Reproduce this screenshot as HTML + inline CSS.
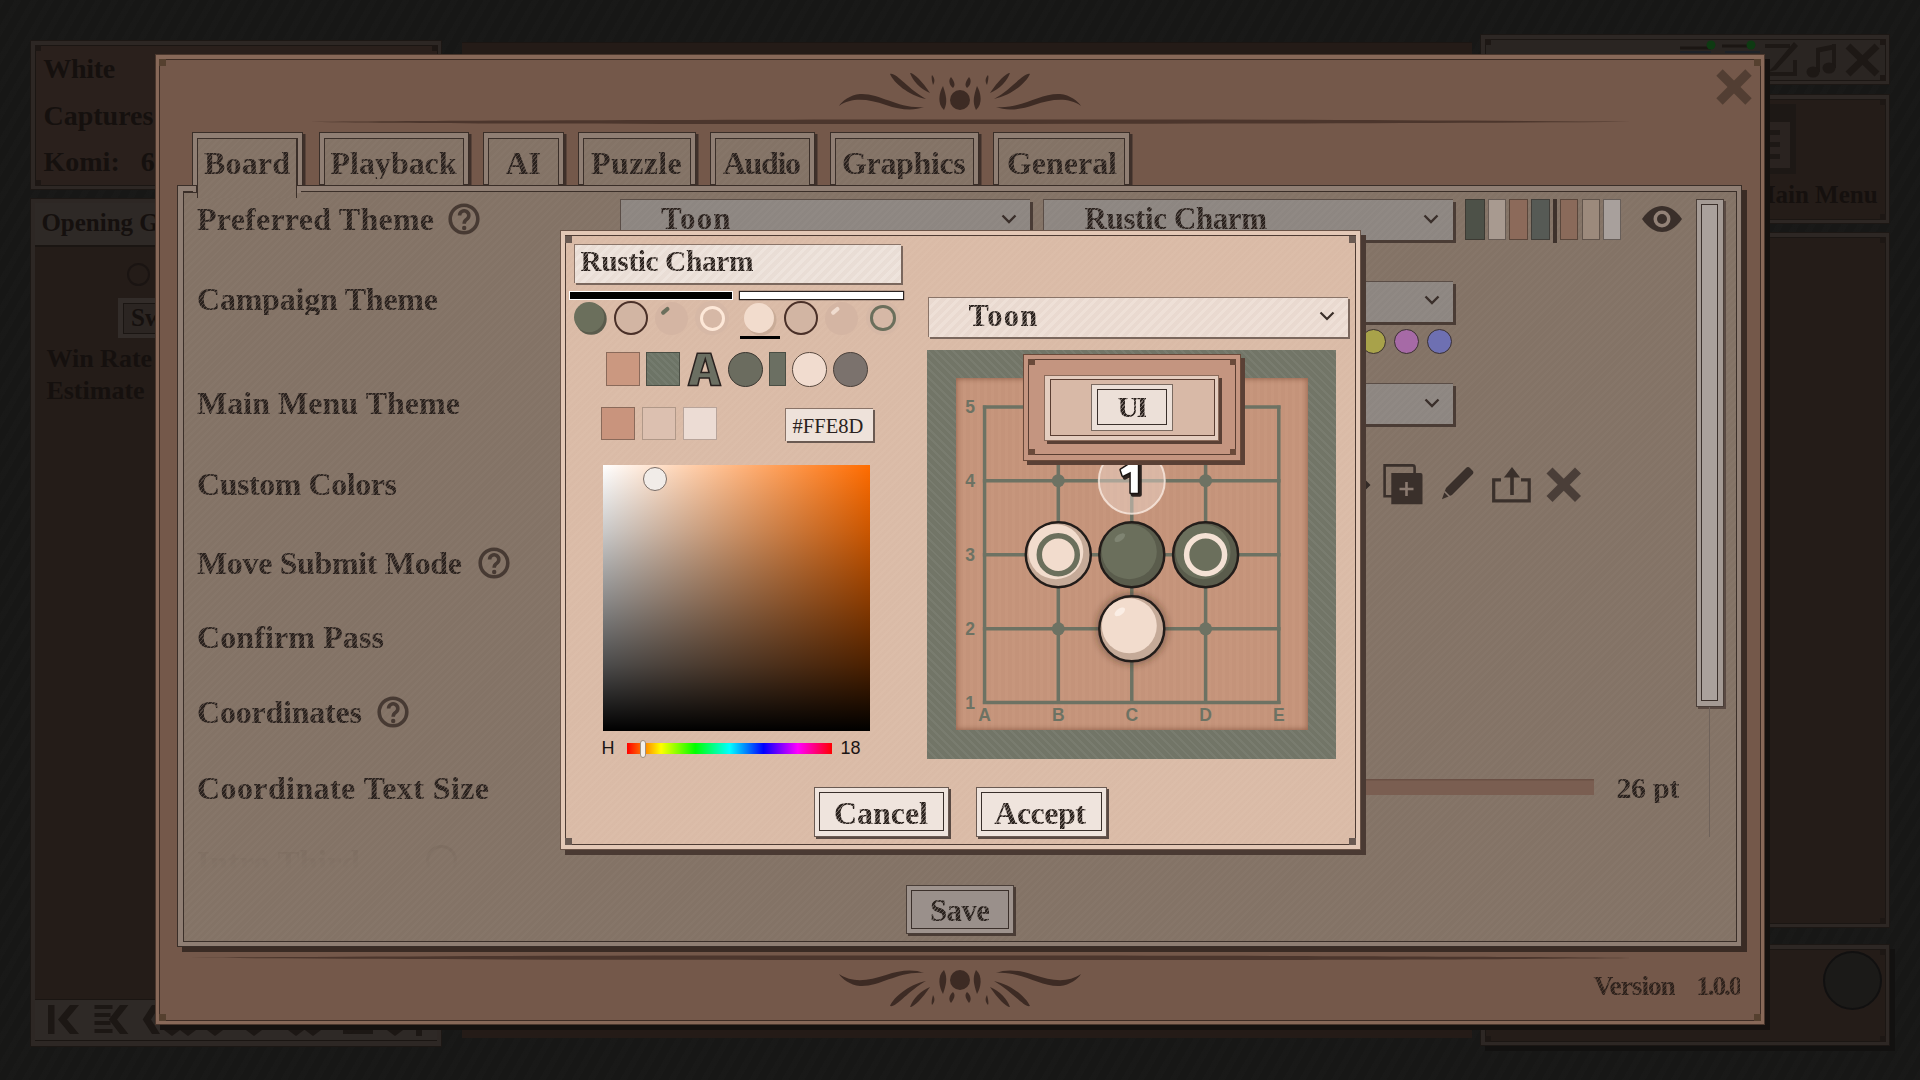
<!DOCTYPE html>
<html><head><meta charset="utf-8">
<style>
*{margin:0;padding:0;box-sizing:border-box}
html,body{width:1920px;height:1080px;overflow:hidden}
body{background:#171716;position:relative;font-family:"Liberation Serif",serif;font-weight:bold;color:#2e2521}
.a{position:absolute}
.t{position:absolute;white-space:nowrap;line-height:1}
svg{position:absolute;overflow:visible}
</style></head><body>

<div class="a" style="left:0px;top:0px;width:1920px;height:1080px;background-image:repeating-linear-gradient(-60deg,rgba(255,255,255,0.006) 0px,rgba(255,255,255,0.006) 6px,rgba(0,0,0,0.0) 6px,rgba(0,0,0,0) 14px)"></div>
<div class="a" style="left:30px;top:40px;width:412px;height:150px;background:#2d2724;box-shadow:inset 0 0 0 1px #1c1714;"></div>
<div class="a" style="left:34.5px;top:44.5px;width:403.0px;height:141.0px;background:#2a201c;border:1.5px solid #1b1613;"></div>
<div class="a" style="left:34.5px;top:44.5px;width:6px;height:6px;background:#1d1714"></div>
<div class="a" style="left:431.5px;top:44.5px;width:6px;height:6px;background:#1d1714"></div>
<div class="a" style="left:34.5px;top:179.5px;width:6px;height:6px;background:#1d1714"></div>
<div class="a" style="left:431.5px;top:179.5px;width:6px;height:6px;background:#1d1714"></div>
<div class="t" style="left:43.3px;top:54.5px;font-size:28px;font-family:'Liberation Serif',serif;font-weight:bold;color:#15100e;letter-spacing:-0.277px;">White</div>
<div class="t" style="left:43.5px;top:102.1px;font-size:28px;font-family:'Liberation Serif',serif;font-weight:bold;color:#15100e;">Captures</div>
<div class="t" style="left:43.5px;top:147.8px;font-size:28px;font-family:'Liberation Serif',serif;font-weight:bold;color:#15100e;">Komi:&nbsp;&nbsp; 6</div>
<div class="a" style="left:30px;top:198px;width:412px;height:849px;background:#2d2724;box-shadow:inset 0 0 0 1px #1c1714"></div>
<div class="a" style="left:35px;top:203px;width:402px;height:43px;background:#2e2926"></div>
<div class="t" style="left:41.4px;top:209.7px;font-size:25px;font-family:'Liberation Serif',serif;font-weight:bold;color:#15100e;">Opening G</div>
<div class="a" style="left:35px;top:245px;width:402px;height:2px;background:#1a1512"></div>
<div class="a" style="left:35px;top:247px;width:402px;height:752px;background:#241c18"></div>
<div class="a" style="left:127px;top:263px;width:23px;height:23px;border-radius:50%;border:2px solid #1a1412"></div>
<div class="a" style="left:118px;top:298px;width:120px;height:40px;background:#322c29;"></div>
<div class="a" style="left:122.5px;top:302.5px;width:111.0px;height:31.0px;background:#2b2522;border:1.5px solid #1a1512;"></div>
<div class="t" style="left:131px;top:305.2px;font-size:25px;font-family:'Liberation Serif',serif;font-weight:bold;color:#15100e;">Sw</div>
<div class="t" style="left:46.4px;top:346.4px;font-size:26px;font-family:'Liberation Serif',serif;font-weight:bold;color:#15100e;">Win Rate</div>
<div class="t" style="left:46.4px;top:378.1px;font-size:26px;font-family:'Liberation Serif',serif;font-weight:bold;color:#15100e;">Estimate</div>
<div class="a" style="left:35px;top:999px;width:402px;height:42px;background:#2e2926;border-top:1.5px solid #1a1512;border-bottom:1.5px solid #1a1512"></div>
<svg style="left:30px;top:990px" width="420" height="60"><g fill="#1c1714"><rect x="18" y="15" width="6.5" height="29"/><path d="M40 15 L28 29.5 L40 44 L49 44 L37 29.5 L49 15Z"/><rect x="64.5" y="15" width="18" height="4"/><rect x="64.5" y="23" width="16" height="4"/><rect x="64.5" y="31" width="16" height="4"/><rect x="64.5" y="39" width="18" height="4"/><path d="M90 15 L78.8 29.5 L90 44 L98.4 44 L87 29.5 L98.4 15Z"/><path d="M122 15 L112.7 29.5 L122 44 L130 44 L121 29.5 L130 15Z"/><path d="M134 40 L142 46 L150 40 L150 38 L134 38Z"/><path d="M150 40 L158 46 L166 40 L166 38 L150 38Z"/><path d="M177 40 L185 46 L193 40 L193 38 L177 38Z"/><path d="M216 40 L224 46 L232 40 L232 38 L216 38Z"/><path d="M258 40 L266 46 L274 40 L274 38 L258 38Z"/><path d="M275 40 L283 46 L291 40 L291 38 L275 38Z"/><rect x="313" y="40" width="30" height="4"/><path d="M313 38 L320 44 L327 38Z"/><path d="M357 40 L365 46 L373 40 L373 38 L357 38Z"/><rect x="386" y="38" width="6" height="8"/></g></svg>
<div class="a" style="left:462px;top:42px;width:1010px;height:996px;background:#241b17;box-shadow:inset 0 1px 0 #1b1512"></div>
<div class="a" style="left:1480px;top:34px;width:410px;height:51px;background:#2d2724;box-shadow:inset 0 0 0 1px #1c1714;"></div>
<div class="a" style="left:1484.5px;top:38.5px;width:401.0px;height:42.0px;background:#2a2522;border:1.5px solid #1b1613;"></div>
<div class="a" style="left:1484.5px;top:38.5px;width:6px;height:6px;background:#1d1714"></div>
<div class="a" style="left:1879.5px;top:38.5px;width:6px;height:6px;background:#1d1714"></div>
<div class="a" style="left:1484.5px;top:74.5px;width:6px;height:6px;background:#1d1714"></div>
<div class="a" style="left:1879.5px;top:74.5px;width:6px;height:6px;background:#1d1714"></div>
<svg style="left:1670px;top:34px" width="220" height="50">
<g stroke="#1b1613" stroke-width="3"><line x1="10" y1="14" x2="41" y2="14"/><line x1="52" y1="12" x2="81" y2="12"/></g>
<g stroke="#1e2228" stroke-width="2"><line x1="10" y1="18" x2="41" y2="18"/><line x1="55" y1="18" x2="90" y2="18"/></g>
<circle cx="41" cy="11" r="4.5" fill="#0e3a12"/><circle cx="81" cy="11" r="4.5" fill="#0e3a12"/>
<path d="M95 12 L120 12 M125 26 L125 40 L98 40" fill="none" stroke="#1d1815" stroke-width="4"/>
<path d="M124 8 L104 32 L98 38 L106 36 L128 12Z" fill="#1d1815"/>
<g fill="#1d1815"><path d="M146 14 L166 10 L166 15 L146 19Z"/><rect x="146" y="14" width="4" height="24"/><rect x="162" y="10" width="4" height="24"/><ellipse cx="143" cy="38" rx="6.5" ry="5.5"/><ellipse cx="159" cy="34" rx="6.5" ry="5.5"/></g>
<g stroke="#1d1815" stroke-width="7"><line x1="178" y1="12" x2="207" y2="40"/><line x1="207" y1="12" x2="178" y2="40"/></g>
</svg>
<div class="a" style="left:1480px;top:94px;width:410px;height:130px;background:#2d2724;box-shadow:inset 0 0 0 1px #1c1714;"></div>
<div class="a" style="left:1484.5px;top:98.5px;width:401.0px;height:121.0px;background:#241c18;border:1.5px solid #1b1613;"></div>
<div class="a" style="left:1484.5px;top:98.5px;width:6px;height:6px;background:#1d1714"></div>
<div class="a" style="left:1879.5px;top:98.5px;width:6px;height:6px;background:#1d1714"></div>
<div class="a" style="left:1484.5px;top:213.5px;width:6px;height:6px;background:#1d1714"></div>
<div class="a" style="left:1879.5px;top:213.5px;width:6px;height:6px;background:#1d1714"></div>
<div class="a" style="left:1740px;top:104px;width:56px;height:70px;background:#1d1815"></div>
<div class="a" style="left:1740px;top:121.7px;width:50px;height:46.3px;background:#2a2320"></div>
<svg style="left:1740px;top:104px" width="56" height="70"><g fill="#1d1815"><rect x="0" y="26" width="40" height="5"/><rect x="0" y="38" width="40" height="5"/><rect x="0" y="50" width="40" height="5"/></g></svg>
<div class="t" style="left:1751.8999999999999px;top:182.2px;font-size:25px;font-family:'Liberation Serif',serif;font-weight:bold;color:#15100e;">Main Menu</div>
<div class="a" style="left:1480px;top:232px;width:410px;height:696px;background:#2d2724;box-shadow:inset 0 0 0 1px #1c1714;"></div>
<div class="a" style="left:1484.5px;top:236.5px;width:401.0px;height:687.0px;background:#241c18;border:1.5px solid #1b1613;"></div>
<div class="a" style="left:1484.5px;top:236.5px;width:6px;height:6px;background:#1d1714"></div>
<div class="a" style="left:1879.5px;top:236.5px;width:6px;height:6px;background:#1d1714"></div>
<div class="a" style="left:1484.5px;top:917.5px;width:6px;height:6px;background:#1d1714"></div>
<div class="a" style="left:1879.5px;top:917.5px;width:6px;height:6px;background:#1d1714"></div>
<div class="a" style="left:1480px;top:944px;width:410px;height:102px;background:#2d2724;box-shadow:inset 0 0 0 1px #1c1714,5px 5px 0 #121110;"></div>
<div class="a" style="left:1484.5px;top:948.5px;width:401.0px;height:93.0px;background:#241c18;border:1.5px solid #1b1613;"></div>
<div class="a" style="left:1484.5px;top:948.5px;width:6px;height:6px;background:#1d1714"></div>
<div class="a" style="left:1879.5px;top:948.5px;width:6px;height:6px;background:#1d1714"></div>
<div class="a" style="left:1484.5px;top:1035.5px;width:6px;height:6px;background:#1d1714"></div>
<div class="a" style="left:1879.5px;top:1035.5px;width:6px;height:6px;background:#1d1714"></div>
<div class="a" style="left:1823px;top:951px;width:59px;height:59px;border-radius:50%;background:#1b1a18;border:2px solid #111010"></div>
<div class="a" style="left:155px;top:54px;width:1610px;height:971px;background:#876858;box-shadow:inset 0 0 0 1px #4a372d,5px 5px 0 #15110f"></div>
<div class="a" style="left:159px;top:59px;width:1602px;height:962px;background:#74584a;border:1.5px solid #3e2c24"></div>
<div class="a" style="left:159px;top:59px;width:7px;height:7px;background:#55402f"></div>
<div class="a" style="left:1754px;top:59px;width:7px;height:7px;background:#55402f"></div>
<div class="a" style="left:159px;top:1014px;width:7px;height:7px;background:#55402f"></div>
<div class="a" style="left:1754px;top:1014px;width:7px;height:7px;background:#55402f"></div>
<svg style="left:838px;top:71px" width="244" height="42" viewBox="0 0 244 42"><g fill="#3d2b24">
<circle cx="122" cy="29" r="10"/>
<path d="M106 39 C99 33 101 22 105 15 C108 24 110 31 106 39Z"/>
<path d="M138 39 C145 33 143 22 139 15 C136 24 134 31 138 39Z"/>
<path d="M115 17 C110 13 111 8 113 6 C116 10 118 14 115 17Z"/>
<path d="M129 17 C134 13 133 8 131 6 C128 10 126 14 129 17Z"/>
<path d="M95 14 C94 10 93 6 94 4 C97 7 97 11 95 14Z"/>
<path d="M149 14 C150 10 151 6 150 4 C147 7 147 11 149 14Z"/>
<path d="M92 22 C82 18 75 10 72 2 C76 2 84 10 92 22Z"/>
<path d="M152 22 C162 18 169 10 172 2 C168 2 160 10 152 22Z"/>
<path d="M88 28 C70 24 56 12 52 3 C58 1 70 18 88 28Z"/>
<path d="M156 28 C174 24 188 12 192 3 C186 1 174 18 156 28Z"/>
<path d="M86 36 C60 38 42 22 22 23 C12 24 4 30 1 35 C14 26 30 28 48 34 C62 39 76 40 86 36Z"/>
<path d="M158 36 C184 38 202 22 222 23 C232 24 240 30 243 35 C230 26 214 28 196 34 C182 39 168 40 158 36Z"/>
</g></svg>
<svg style="left:838px;top:967px" width="244" height="42" viewBox="0 0 244 42"><g transform="translate(0,42) scale(1,-1)"><g fill="#3d2b24">
<circle cx="122" cy="29" r="10"/>
<path d="M106 39 C99 33 101 22 105 15 C108 24 110 31 106 39Z"/>
<path d="M138 39 C145 33 143 22 139 15 C136 24 134 31 138 39Z"/>
<path d="M115 17 C110 13 111 8 113 6 C116 10 118 14 115 17Z"/>
<path d="M129 17 C134 13 133 8 131 6 C128 10 126 14 129 17Z"/>
<path d="M95 14 C94 10 93 6 94 4 C97 7 97 11 95 14Z"/>
<path d="M149 14 C150 10 151 6 150 4 C147 7 147 11 149 14Z"/>
<path d="M92 22 C82 18 75 10 72 2 C76 2 84 10 92 22Z"/>
<path d="M152 22 C162 18 169 10 172 2 C168 2 160 10 152 22Z"/>
<path d="M88 28 C70 24 56 12 52 3 C58 1 70 18 88 28Z"/>
<path d="M156 28 C174 24 188 12 192 3 C186 1 174 18 156 28Z"/>
<path d="M86 36 C60 38 42 22 22 23 C12 24 4 30 1 35 C14 26 30 28 48 34 C62 39 76 40 86 36Z"/>
<path d="M158 36 C184 38 202 22 222 23 C232 24 240 30 243 35 C230 26 214 28 196 34 C182 39 168 40 158 36Z"/>
</g></g></svg>
<svg style="left:300px;top:114.5px" width="1330" height="14" viewBox="0 0 1560 14" preserveAspectRatio="none"><path d="M0 7 C200 5 600 4.2 1000 4.6 C1200 4.8 1400 5.6 1560 6.8 C1400 8 1200 8.6 1000 8.8 C600 9.4 200 9.2 0 7Z" fill="#4a352b" opacity="0.95"/></svg>
<svg style="left:190px;top:950.5px" width="1440" height="14" viewBox="0 0 1560 14" preserveAspectRatio="none"><g transform="translate(1560,0) scale(-1,1)"><path d="M0 7 C200 5 600 4.2 1000 4.6 C1200 4.8 1400 5.6 1560 6.8 C1400 8 1200 8.6 1000 8.8 C600 9.4 200 9.2 0 7Z" fill="#4a352b" opacity="0.95"/></g></svg>
<svg style="left:1716px;top:69px" width="36" height="36"><g stroke="#523e33" stroke-width="9" stroke-linecap="butt"><line x1="3.5" y1="3.5" x2="32.5" y2="32.5"/><line x1="32.5" y1="3.5" x2="3.5" y2="32.5"/></g></svg>
<div class="a" style="left:192px;top:132px;width:111px;height:61px;background:#8f7e73;box-shadow:inset 0 0 0 1px #3a2e28,2.5px 2px 0 #3f302a"></div>
<div class="a" style="left:197px;top:137.5px;width:101px;height:61px;background:#857467;border:1.5px solid #3b2f29;border-bottom:none;background-image:repeating-linear-gradient(-45deg,rgba(255,255,255,0.012) 0px,rgba(255,255,255,0.012) 2px,rgba(0,0,0,0.01) 2px,rgba(0,0,0,0.01) 5px)"></div>
<div class="a" style="left:319px;top:132px;width:150px;height:53px;background:#8f7e73;box-shadow:inset 0 0 0 1px #3a2e28,2.5px 2px 0 #3f302a"></div>
<div class="a" style="left:324px;top:137.5px;width:140px;height:53px;background:#857467;border:1.5px solid #3b2f29;border-bottom:none;background-image:repeating-linear-gradient(-45deg,rgba(255,255,255,0.012) 0px,rgba(255,255,255,0.012) 2px,rgba(0,0,0,0.01) 2px,rgba(0,0,0,0.01) 5px)"></div>
<div class="a" style="left:483px;top:132px;width:81px;height:53px;background:#8f7e73;box-shadow:inset 0 0 0 1px #3a2e28,2.5px 2px 0 #3f302a"></div>
<div class="a" style="left:488px;top:137.5px;width:71px;height:53px;background:#857467;border:1.5px solid #3b2f29;border-bottom:none;background-image:repeating-linear-gradient(-45deg,rgba(255,255,255,0.012) 0px,rgba(255,255,255,0.012) 2px,rgba(0,0,0,0.01) 2px,rgba(0,0,0,0.01) 5px)"></div>
<div class="a" style="left:578px;top:132px;width:118px;height:53px;background:#8f7e73;box-shadow:inset 0 0 0 1px #3a2e28,2.5px 2px 0 #3f302a"></div>
<div class="a" style="left:583px;top:137.5px;width:108px;height:53px;background:#857467;border:1.5px solid #3b2f29;border-bottom:none;background-image:repeating-linear-gradient(-45deg,rgba(255,255,255,0.012) 0px,rgba(255,255,255,0.012) 2px,rgba(0,0,0,0.01) 2px,rgba(0,0,0,0.01) 5px)"></div>
<div class="a" style="left:710px;top:132px;width:105px;height:53px;background:#8f7e73;box-shadow:inset 0 0 0 1px #3a2e28,2.5px 2px 0 #3f302a"></div>
<div class="a" style="left:715px;top:137.5px;width:95px;height:53px;background:#857467;border:1.5px solid #3b2f29;border-bottom:none;background-image:repeating-linear-gradient(-45deg,rgba(255,255,255,0.012) 0px,rgba(255,255,255,0.012) 2px,rgba(0,0,0,0.01) 2px,rgba(0,0,0,0.01) 5px)"></div>
<div class="a" style="left:830px;top:132px;width:149px;height:53px;background:#8f7e73;box-shadow:inset 0 0 0 1px #3a2e28,2.5px 2px 0 #3f302a"></div>
<div class="a" style="left:835px;top:137.5px;width:139px;height:53px;background:#857467;border:1.5px solid #3b2f29;border-bottom:none;background-image:repeating-linear-gradient(-45deg,rgba(255,255,255,0.012) 0px,rgba(255,255,255,0.012) 2px,rgba(0,0,0,0.01) 2px,rgba(0,0,0,0.01) 5px)"></div>
<div class="a" style="left:993px;top:132px;width:137px;height:53px;background:#8f7e73;box-shadow:inset 0 0 0 1px #3a2e28,2.5px 2px 0 #3f302a"></div>
<div class="a" style="left:998px;top:137.5px;width:127px;height:53px;background:#857467;border:1.5px solid #3b2f29;border-bottom:none;background-image:repeating-linear-gradient(-45deg,rgba(255,255,255,0.012) 0px,rgba(255,255,255,0.012) 2px,rgba(0,0,0,0.01) 2px,rgba(0,0,0,0.01) 5px)"></div>
<div class="a" style="left:177px;top:185px;width:1565px;height:762px;background:#8f7e73;box-shadow:inset 0 0 0 1px #3a2e28,5px 5px 0 #3a2b24"></div>
<div class="a" style="left:183px;top:191px;width:1554px;height:751px;background:#857467;border:1.5px solid #3b2f29;background-image:repeating-linear-gradient(-45deg,rgba(255,255,255,0.012) 0px,rgba(255,255,255,0.012) 2px,rgba(0,0,0,0.01) 2px,rgba(0,0,0,0.01) 5px)"></div>
<div class="a" style="left:193px;top:186px;width:108px;height:7px;background:#8f7e73"></div>
<div class="a" style="left:197px;top:137.5px;width:100px;height:60px;background:#857467;border:1.5px solid #3b2f29;border-bottom:none;background-image:repeating-linear-gradient(-45deg,rgba(255,255,255,0.012) 0px,rgba(255,255,255,0.012) 2px,rgba(0,0,0,0.01) 2px,rgba(0,0,0,0.01) 5px)"></div>
<div class="a" style="left:184px;top:191.5px;width:13px;height:1.5px;background:#3b2f29"></div>
<div class="a" style="left:196px;top:186px;width:1.5px;height:7px;background:#3b2f29"></div>
<div class="t" style="left:204px;top:146.9px;font-size:32px;font-family:'Liberation Serif',serif;font-weight:bold;color:#2a221e;letter-spacing:0.164px;background:repeating-linear-gradient(-50deg,#2a221e 0px,#2a221e 1.8px,#544740 1.8px,#544740 2.8px);-webkit-background-clip:text;background-clip:text;-webkit-text-fill-color:transparent">Board</div>
<div class="t" style="left:330.6px;top:146.9px;font-size:32px;font-family:'Liberation Serif',serif;font-weight:bold;color:#2a221e;letter-spacing:-0.034px;background:repeating-linear-gradient(-50deg,#2a221e 0px,#2a221e 1.8px,#544740 1.8px,#544740 2.8px);-webkit-background-clip:text;background-clip:text;-webkit-text-fill-color:transparent">Playback</div>
<div class="t" style="left:505.5px;top:146.9px;font-size:32px;font-family:'Liberation Serif',serif;font-weight:bold;color:#2a221e;letter-spacing:-0.065px;background:repeating-linear-gradient(-50deg,#2a221e 0px,#2a221e 1.8px,#544740 1.8px,#544740 2.8px);-webkit-background-clip:text;background-clip:text;-webkit-text-fill-color:transparent">AI</div>
<div class="t" style="left:591px;top:146.9px;font-size:32px;font-family:'Liberation Serif',serif;font-weight:bold;color:#2a221e;letter-spacing:0.391px;background:repeating-linear-gradient(-50deg,#2a221e 0px,#2a221e 1.8px,#544740 1.8px,#544740 2.8px);-webkit-background-clip:text;background-clip:text;-webkit-text-fill-color:transparent">Puzzle</div>
<div class="t" style="left:722.9px;top:146.9px;font-size:32px;font-family:'Liberation Serif',serif;font-weight:bold;color:#2a221e;letter-spacing:-1.399px;background:repeating-linear-gradient(-50deg,#2a221e 0px,#2a221e 1.8px,#544740 1.8px,#544740 2.8px);-webkit-background-clip:text;background-clip:text;-webkit-text-fill-color:transparent">Audio</div>
<div class="t" style="left:842px;top:146.9px;font-size:32px;font-family:'Liberation Serif',serif;font-weight:bold;color:#2a221e;letter-spacing:-0.348px;background:repeating-linear-gradient(-50deg,#2a221e 0px,#2a221e 1.8px,#544740 1.8px,#544740 2.8px);-webkit-background-clip:text;background-clip:text;-webkit-text-fill-color:transparent">Graphics</div>
<div class="t" style="left:1007px;top:146.9px;font-size:32px;font-family:'Liberation Serif',serif;font-weight:bold;color:#2a221e;letter-spacing:-0.032px;background:repeating-linear-gradient(-50deg,#2a221e 0px,#2a221e 1.8px,#544740 1.8px,#544740 2.8px);-webkit-background-clip:text;background-clip:text;-webkit-text-fill-color:transparent">General</div>
<div class="t" style="left:197px;top:203.1px;font-size:32px;font-family:'Liberation Serif',serif;font-weight:bold;color:#2a221e;letter-spacing:0.236px;background:repeating-linear-gradient(-50deg,#2a221e 0px,#2a221e 1.8px,#544740 1.8px,#544740 2.8px);-webkit-background-clip:text;background-clip:text;-webkit-text-fill-color:transparent">Preferred Theme</div>
<div class="t" style="left:197px;top:283.4px;font-size:32px;font-family:'Liberation Serif',serif;font-weight:bold;color:#2a221e;letter-spacing:-0.221px;background:repeating-linear-gradient(-50deg,#2a221e 0px,#2a221e 1.8px,#544740 1.8px,#544740 2.8px);-webkit-background-clip:text;background-clip:text;-webkit-text-fill-color:transparent">Campaign Theme</div>
<div class="t" style="left:197px;top:387.2px;font-size:32px;font-family:'Liberation Serif',serif;font-weight:bold;color:#2a221e;letter-spacing:0.034px;background:repeating-linear-gradient(-50deg,#2a221e 0px,#2a221e 1.8px,#544740 1.8px,#544740 2.8px);-webkit-background-clip:text;background-clip:text;-webkit-text-fill-color:transparent">Main Menu Theme</div>
<div class="t" style="left:197px;top:468.4px;font-size:32px;font-family:'Liberation Serif',serif;font-weight:bold;color:#2a221e;letter-spacing:-0.444px;background:repeating-linear-gradient(-50deg,#2a221e 0px,#2a221e 1.8px,#544740 1.8px,#544740 2.8px);-webkit-background-clip:text;background-clip:text;-webkit-text-fill-color:transparent">Custom Colors</div>
<div class="t" style="left:197px;top:547.2px;font-size:32px;font-family:'Liberation Serif',serif;font-weight:bold;color:#2a221e;letter-spacing:-0.347px;background:repeating-linear-gradient(-50deg,#2a221e 0px,#2a221e 1.8px,#544740 1.8px,#544740 2.8px);-webkit-background-clip:text;background-clip:text;-webkit-text-fill-color:transparent">Move Submit Mode</div>
<div class="t" style="left:197px;top:621.4px;font-size:32px;font-family:'Liberation Serif',serif;font-weight:bold;color:#2a221e;letter-spacing:0.112px;background:repeating-linear-gradient(-50deg,#2a221e 0px,#2a221e 1.8px,#544740 1.8px,#544740 2.8px);-webkit-background-clip:text;background-clip:text;-webkit-text-fill-color:transparent">Confirm Pass</div>
<div class="t" style="left:197px;top:696.4px;font-size:32px;font-family:'Liberation Serif',serif;font-weight:bold;color:#2a221e;letter-spacing:-0.211px;background:repeating-linear-gradient(-50deg,#2a221e 0px,#2a221e 1.8px,#544740 1.8px,#544740 2.8px);-webkit-background-clip:text;background-clip:text;-webkit-text-fill-color:transparent">Coordinates</div>
<div class="t" style="left:197px;top:772.0px;font-size:32px;font-family:'Liberation Serif',serif;font-weight:bold;color:#2a221e;letter-spacing:0.398px;background:repeating-linear-gradient(-50deg,#2a221e 0px,#2a221e 1.8px,#544740 1.8px,#544740 2.8px);-webkit-background-clip:text;background-clip:text;-webkit-text-fill-color:transparent">Coordinate Text Size</div>
<div class="a" style="left:190px;top:840px;width:300px;height:28px;overflow:hidden;-webkit-mask-image:linear-gradient(to bottom,rgba(0,0,0,0.22),rgba(0,0,0,0))"><div class="t" style="left:7px;top:7px;font-size:33px;color:rgba(60,45,38,0.5)">Intro Third</div><div class="a" style="left:236px;top:5px;width:31px;height:31px;border-radius:50%;border:3px solid rgba(60,45,38,0.5)"></div></div>
<svg style="left:446px;top:200.5px" width="36" height="36"><circle cx="18" cy="18" r="13.8" fill="none" stroke="#473a33" stroke-width="3.6"/><path d="M13.6 14.4 A4.6 4.6 0 1 1 20.8 18.2 Q18.2 19.8 18.2 22.8" fill="none" stroke="#473a33" stroke-width="3.6"/><circle cx="18.2" cy="27" r="2.2" fill="#473a33"/></svg>
<svg style="left:476px;top:545.4px" width="36" height="36"><circle cx="18" cy="18" r="13.8" fill="none" stroke="#473a33" stroke-width="3.6"/><path d="M13.6 14.4 A4.6 4.6 0 1 1 20.8 18.2 Q18.2 19.8 18.2 22.8" fill="none" stroke="#473a33" stroke-width="3.6"/><circle cx="18.2" cy="27" r="2.2" fill="#473a33"/></svg>
<svg style="left:375px;top:693.5px" width="36" height="36"><circle cx="18" cy="18" r="13.8" fill="none" stroke="#473a33" stroke-width="3.6"/><path d="M13.6 14.4 A4.6 4.6 0 1 1 20.8 18.2 Q18.2 19.8 18.2 22.8" fill="none" stroke="#473a33" stroke-width="3.6"/><circle cx="18.2" cy="27" r="2.2" fill="#473a33"/></svg>
<div class="a" style="left:620px;top:199px;width:410px;height:41px;background:#8f8883;box-shadow:inset 1px 1px 0 #5a4d46,3px 3px 0 #4a3c35;background-image:repeating-linear-gradient(-45deg,rgba(255,255,255,0.012) 0px,rgba(255,255,255,0.012) 2px,rgba(0,0,0,0.01) 2px,rgba(0,0,0,0.01) 5px)"></div>
<svg style="left:1000.5px;top:213.5px" width="16" height="10"><path d="M1.5 1.5 L8 8 L14.5 1.5" fill="none" stroke="#3a2f2a" stroke-width="2.4"/></svg>
<div class="t" style="left:661px;top:202.6px;font-size:31px;font-family:'Liberation Serif',serif;font-weight:bold;color:#2a221e;letter-spacing:1.175px;background:repeating-linear-gradient(-50deg,#2a221e 0px,#2a221e 1.8px,#5a504b 1.8px,#5a504b 2.8px);-webkit-background-clip:text;background-clip:text;-webkit-text-fill-color:transparent">Toon</div>
<div class="a" style="left:1043px;top:199px;width:410px;height:41px;background:#8f8883;box-shadow:inset 1px 1px 0 #5a4d46,3px 3px 0 #4a3c35;background-image:repeating-linear-gradient(-45deg,rgba(255,255,255,0.012) 0px,rgba(255,255,255,0.012) 2px,rgba(0,0,0,0.01) 2px,rgba(0,0,0,0.01) 5px)"></div>
<svg style="left:1423.3px;top:213.5px" width="16" height="10"><path d="M1.5 1.5 L8 8 L14.5 1.5" fill="none" stroke="#3a2f2a" stroke-width="2.4"/></svg>
<div class="t" style="left:1084.6px;top:202.6px;font-size:31px;font-family:'Liberation Serif',serif;font-weight:bold;color:#2a221e;letter-spacing:-0.404px;background:repeating-linear-gradient(-50deg,#2a221e 0px,#2a221e 1.8px,#5a504b 1.8px,#5a504b 2.8px);-webkit-background-clip:text;background-clip:text;-webkit-text-fill-color:transparent">Rustic Charm</div>
<div class="a" style="left:1300px;top:281px;width:153px;height:41px;background:#8f8883;box-shadow:inset 1px 1px 0 #5a4d46,3px 3px 0 #4a3c35;background-image:repeating-linear-gradient(-45deg,rgba(255,255,255,0.012) 0px,rgba(255,255,255,0.012) 2px,rgba(0,0,0,0.01) 2px,rgba(0,0,0,0.01) 5px)"></div>
<svg style="left:1423.5px;top:295px" width="16" height="10"><path d="M1.5 1.5 L8 8 L14.5 1.5" fill="none" stroke="#3a2f2a" stroke-width="2.4"/></svg>
<div class="a" style="left:1300px;top:383px;width:153px;height:41px;background:#8f8883;box-shadow:inset 1px 1px 0 #5a4d46,3px 3px 0 #4a3c35;background-image:repeating-linear-gradient(-45deg,rgba(255,255,255,0.012) 0px,rgba(255,255,255,0.012) 2px,rgba(0,0,0,0.01) 2px,rgba(0,0,0,0.01) 5px)"></div>
<svg style="left:1423.5px;top:397.5px" width="16" height="10"><path d="M1.5 1.5 L8 8 L14.5 1.5" fill="none" stroke="#3a2f2a" stroke-width="2.4"/></svg>
<div class="a" style="left:1465px;top:199px;width:20px;height:41px;background:#4d5148;box-shadow:inset 0 0 0 1px rgba(50,40,35,0.55)"></div>
<div class="a" style="left:1488px;top:199px;width:18px;height:41px;background:#a89a90;box-shadow:inset 0 0 0 1px rgba(50,40,35,0.55)"></div>
<div class="a" style="left:1509px;top:199px;width:19px;height:41px;background:#8c6a5a;box-shadow:inset 0 0 0 1px rgba(50,40,35,0.55)"></div>
<div class="a" style="left:1531px;top:199px;width:19px;height:41px;background:#565a55;box-shadow:inset 0 0 0 1px rgba(50,40,35,0.55)"></div>
<div class="a" style="left:1560px;top:199px;width:18px;height:41px;background:#8a6a5a;box-shadow:inset 0 0 0 1px rgba(50,40,35,0.55)"></div>
<div class="a" style="left:1582px;top:199px;width:18px;height:41px;background:#9c8a7c;box-shadow:inset 0 0 0 1px rgba(50,40,35,0.55)"></div>
<div class="a" style="left:1603px;top:199px;width:18px;height:41px;background:#a8a09c;box-shadow:inset 0 0 0 1px rgba(50,40,35,0.55)"></div>
<div class="a" style="left:1553px;top:199px;width:4px;height:44px;background:#3e322c"></div>
<svg style="left:1641px;top:205px" width="42" height="28"><path d="M1 14 C8 4 15 1 21 1 C27 1 34 4 41 14 C34 24 27 27 21 27 C15 27 8 24 1 14Z" fill="#3a2f2a"/><circle cx="21" cy="14" r="8.5" fill="#938277"/><circle cx="21" cy="14" r="5" fill="#3a2f2a"/></svg>
<div class="a" style="left:1361.2px;top:328.9px;width:25px;height:25px;border-radius:50%;background:#a8a24a;border:1.5px solid #3a3030"></div>
<div class="a" style="left:1393.7px;top:328.9px;width:25px;height:25px;border-radius:50%;background:#a66aa6;border:1.5px solid #3a3030"></div>
<div class="a" style="left:1426.7px;top:328.9px;width:25px;height:25px;border-radius:50%;background:#6e70b2;border:1.5px solid #3a3030"></div>
<svg style="left:1350px;top:455px" width="240" height="56">
<path d="M8 21 L17 30 L8 39" fill="none" stroke="#332a26" stroke-width="5"/>
<path d="M34.6 10.4 L62.5 10.4 Q64.6 10.4 64.6 12.5 L64.6 41.3 L34.6 41.3Z" fill="none" stroke="#3a302b" stroke-width="2.6"/>
<path d="M41.3 18 L70.5 18 Q72.5 18 72.5 20 L72.5 49.3 L41.3 49.3Z" fill="#3a302b"/>
<path d="M56.5 27 L56.5 41 M49.5 34 L63.5 34" stroke="#8a7a70" stroke-width="2.6"/>
<path d="M91.9 44.3 L96 33 L116 13 Q118 11 120 13 L122.4 15.4 Q124.4 17.4 122.4 19.4 L102 40Z" fill="#3a302b"/>
<path d="M94.5 36.5 L100 42" stroke="#8a7a70" stroke-width="1.6"/>
<path d="M151 24.9 L143.7 24.9 L143.7 45.8 L179.2 45.8 L179.2 24.9 L171 24.9" fill="none" stroke="#3a302b" stroke-width="3.2"/>
<rect x="160.2" y="21" width="3.6" height="19" fill="#3a302b"/>
<path d="M153.9 22.5 L162 12 L170.1 22.5Z" fill="#3a302b"/>
<g stroke="#4a3e38" stroke-width="8.5"><line x1="199.5" y1="15.5" x2="228" y2="44"/><line x1="228" y1="15.5" x2="199.5" y2="44"/></g>
</svg>
<div class="a" style="left:1340px;top:779px;width:254px;height:16px;background:#7a5e51;box-shadow:inset 0 1.5px 0 #6a5045"></div>
<div class="t" style="left:1616.4px;top:772.7px;font-size:30px;font-family:'Liberation Serif',serif;font-weight:bold;color:#2a221e;letter-spacing:-0.294px;background:repeating-linear-gradient(-50deg,#2a221e 0px,#2a221e 1.8px,#544740 1.8px,#544740 2.8px);-webkit-background-clip:text;background-clip:text;-webkit-text-fill-color:transparent">26 pt</div>
<div class="a" style="left:1696px;top:199px;width:28px;height:508px;background:#a49a94;box-shadow:inset 0 0 0 1px #4a3e38,2px 2px 0 #5a4a43"></div>
<div class="a" style="left:1701px;top:204px;width:17px;height:497px;background:#aaa19c;border:1.5px solid #3b302b"></div>
<div class="a" style="left:1708.5px;top:707px;width:1.5px;height:130px;background:#6f625a"></div>
<div class="a" style="left:906px;top:885px;width:108px;height:49px;background:#9e938d;box-shadow:inset 0 0 0 1px #4a3e38,2px 2px 0 #4a3c35"></div>
<div class="a" style="left:911px;top:890px;width:98px;height:39px;background:#9a908b;border:1.5px solid #3b302b"></div>
<div class="t" style="left:930px;top:894.7px;font-size:31px;font-family:'Liberation Serif',serif;font-weight:bold;color:#2a221e;letter-spacing:-0.667px;background:repeating-linear-gradient(-50deg,#2a221e 0px,#2a221e 1.8px,#5e5550 1.8px,#5e5550 2.8px);-webkit-background-clip:text;background-clip:text;-webkit-text-fill-color:transparent">Save</div>
<div class="t" style="left:1593.4px;top:971.5px;font-size:27.5px;font-family:'Liberation Serif',serif;font-weight:bold;color:#2e221c;letter-spacing:-1.106px;background:repeating-linear-gradient(-50deg,#2e221c 0px,#2e221c 1.8px,#4e3a30 1.8px,#4e3a30 2.8px);-webkit-background-clip:text;background-clip:text;-webkit-text-fill-color:transparent">Version</div>
<div class="t" style="left:1696.3px;top:971.5px;font-size:27.5px;font-family:'Liberation Serif',serif;font-weight:bold;color:#2e221c;letter-spacing:-2.200px;background:repeating-linear-gradient(-50deg,#2e221c 0px,#2e221c 1.8px,#4e3a30 1.8px,#4e3a30 2.8px);-webkit-background-clip:text;background-clip:text;-webkit-text-fill-color:transparent">1.0.0</div>
<div class="a" style="left:560px;top:230px;width:801px;height:620px;background:#e3c8b6;box-shadow:inset 0 0 0 1px #6a5448,5px 5px 0 #4a3a33"></div>
<div class="a" style="left:565px;top:235px;width:791px;height:610px;background:#dbbca8;border:1.5px solid #4e3c34;background-image:repeating-linear-gradient(-45deg,rgba(255,255,255,0.015) 0px,rgba(255,255,255,0.015) 2px,rgba(120,80,60,0.012) 2px,rgba(120,80,60,0.012) 5px)"></div>
<div class="a" style="left:565px;top:236px;width:6.5px;height:6.5px;background:#6a5a52"></div>
<div class="a" style="left:1349px;top:236px;width:6.5px;height:6.5px;background:#6a5a52"></div>
<div class="a" style="left:565px;top:838px;width:6.5px;height:6.5px;background:#6a5a52"></div>
<div class="a" style="left:1349px;top:838px;width:6.5px;height:6.5px;background:#6a5a52"></div>
<div class="a" style="left:573.5px;top:243.5px;width:327px;height:39px;background:#ece0d8;box-shadow:inset 1px 1px 0 #8a7468,2px 2px 0 #7a675d;background-image:repeating-linear-gradient(-45deg,rgba(255,255,255,0.12) 0px,rgba(255,255,255,0.12) 3px,rgba(0,0,0,0.012) 3px,rgba(0,0,0,0.012) 7px)"></div>
<div class="t" style="left:580.5px;top:247.3px;font-size:29.5px;font-family:'Liberation Serif',serif;font-weight:bold;color:#2a221e;letter-spacing:-0.437px;background:repeating-linear-gradient(-50deg,#2a221e 0px,#2a221e 1.8px,#7a6e68 1.8px,#7a6e68 2.8px);-webkit-background-clip:text;background-clip:text;-webkit-text-fill-color:transparent">Rustic Charm</div>
<div class="a" style="left:570px;top:292px;width:162px;height:7px;background:#000;box-shadow:0 0 0 1px #fff"></div>
<div class="a" style="left:740px;top:292px;width:163px;height:7px;background:#fff;box-shadow:0 0 0 1.2px #2a2220"></div>
<div class="a" style="left:740.3px;top:336px;width:40px;height:3.2px;background:#000"></div>
<svg style="left:570.0px;top:298.4px" width="39.2" height="39.2"><circle cx="21.1" cy="21.1" r="15.600000000000001" fill="#5a5b4c"/><circle cx="19.1" cy="19.1" r="15.100000000000001" fill="#6b6f5c"/></svg>
<div class="a" style="left:613.5px;top:301px;width:34px;height:34px;border-radius:50%;background:#d2b5a3;border:2px solid #4a3028"></div>
<div class="a" style="left:655px;top:302px;width:33px;height:33px;border-radius:50%;background:#d4b5a3"></div>
<svg style="left:660px;top:305px" width="12" height="10"><path d="M3.2 7.6 L7.4 4" stroke="#6b6f5c" stroke-width="4.2" stroke-linecap="round"/></svg>
<div class="a" style="left:695px;top:301px;width:34px;height:34px;border-radius:50%;background:#d6b8a6"></div>
<div class="a" style="left:699.5px;top:305.5px;width:25.5px;height:25.5px;border-radius:50%;border:3.6px solid #fde8d8;background:#d6b8a6"></div>
<svg style="left:739.5px;top:298.5px" width="39.0" height="39.0"><circle cx="21.0" cy="21.0" r="15.5" fill="#c9ac98"/><circle cx="19.0" cy="19.0" r="15.0" fill="#f2dccd"/></svg>
<div class="a" style="left:783.8px;top:301.4px;width:34px;height:34px;border-radius:50%;background:#d2b5a3;border:2px solid #4a3028"></div>
<div class="a" style="left:825px;top:302px;width:33px;height:33px;border-radius:50%;background:#d4b5a3"></div>
<svg style="left:830px;top:305px" width="12" height="10"><path d="M3.2 7.6 L7.4 4" stroke="#f0dccf" stroke-width="4.2" stroke-linecap="round"/></svg>
<div class="a" style="left:866px;top:301px;width:34px;height:34px;border-radius:50%;background:#d6b8a6"></div>
<div class="a" style="left:870px;top:305px;width:25.5px;height:25.5px;border-radius:50%;border:3.6px solid #6b6f5c;background:#d6b8a6"></div>
<div class="a" style="left:605.5px;top:352.3px;width:34px;height:34px;background:#cb9880;box-shadow:inset 0 0 0 1px #8a6a5a"></div>
<div class="a" style="left:646.4px;top:352.3px;width:34px;height:34px;background:#6d7466;box-shadow:inset 0 0 0 1px #4a4e44;background-image:repeating-linear-gradient(45deg,rgba(255,255,255,0.05) 0 2px,transparent 2px 5px)"></div>
<svg style="left:680px;top:345px" width="50" height="50"><path d="M17.3 8.3 L30.8 8.3 L40.7 40.5 L31 40.5 L29.2 33 L19.5 33 L17.8 40.5 L8.2 40.5Z M21 27.5 L29 27.5 L25.3 14Z" fill="#6b6f62" stroke="#2a2220" stroke-width="1.5" fill-rule="evenodd"/></svg>
<div class="a" style="left:728px;top:352px;width:35px;height:35px;border-radius:50%;background:#6b6c5f;border:1.5px solid #3a3630"></div>
<div class="a" style="left:768.7px;top:352.3px;width:17px;height:34px;background:#6b6f62;box-shadow:inset 0 0 0 1px #4a4e44"></div>
<div class="a" style="left:792px;top:352px;width:34.5px;height:34.5px;border-radius:50%;background:#f1dccf;border:1.2px solid #5a4a40"></div>
<div class="a" style="left:833px;top:352px;width:35px;height:35px;border-radius:50%;background:#7b726d;border:1.5px solid #4a403a"></div>
<div class="a" style="left:601px;top:407.4px;width:34px;height:33px;background:#c9947d;box-shadow:inset 0 0 0 1px #8a6a5a"></div>
<div class="a" style="left:642px;top:407.4px;width:34px;height:33px;background:#dcc0b0;box-shadow:inset 0 0 0 1px #b09888"></div>
<div class="a" style="left:683px;top:407.4px;width:34px;height:33px;background:#ecdcd4;box-shadow:inset 0 0 0 1px #b8a49a"></div>
<div class="a" style="left:785px;top:408px;width:87.5px;height:33px;background:#eee2da;box-shadow:inset 1px 1px 0 #8a7468,2px 2px 0 #6a5a52"></div>
<div class="t" style="left:792.4px;top:415.6px;font-size:20.5px;font-family:'Liberation Serif',serif;font-weight:normal;color:#2a2220;letter-spacing:0.074px;">#FFE8D</div>
<div class="a" style="left:603px;top:465px;width:267px;height:266px;background:linear-gradient(to right,#fff,rgb(255,108,0))"></div>
<div class="a" style="left:603px;top:465px;width:267px;height:266px;background:linear-gradient(to bottom,rgba(0,0,0,0) 0%,rgba(0,0,0,0.21) 25%,rgba(0,0,0,0.45) 50%,rgba(0,0,0,0.70) 75%,#000 100%)"></div>
<div class="a" style="left:643px;top:466.5px;width:24px;height:24px;border-radius:50%;background:#f1ece8;border:1.2px solid #7a6d66"></div>
<div class="a" style="left:627px;top:743px;width:205px;height:11px;background:linear-gradient(to right,#f00 0%,#ff0 16.6%,#0f0 33.3%,#0ff 50%,#00f 66.6%,#f0f 83.3%,#f00 100%)"></div>
<div class="a" style="left:639.5px;top:739.5px;width:6px;height:18px;border-radius:3px;background:#f4f0ec;border:1px solid #a09080"></div>
<div class="t" style="left:601.4px;top:738.9px;font-size:18px;font-family:'Liberation Sans',sans-serif;font-weight:normal;color:#1a1514;">H</div>
<div class="t" style="left:840.5px;top:738.9px;font-size:18px;font-family:'Liberation Sans',sans-serif;font-weight:normal;color:#1a1514;">18</div>
<div class="a" style="left:928px;top:297px;width:420px;height:40px;background:#ecdcd2;box-shadow:inset 1px 1px 0 #8a7468,2px 2px 0 #7a675d;background-image:repeating-linear-gradient(-45deg,rgba(255,255,255,0.12) 0px,rgba(255,255,255,0.12) 3px,rgba(0,0,0,0.012) 3px,rgba(0,0,0,0.012) 7px)"></div>
<div class="t" style="left:968.6px;top:301.0px;font-size:30.5px;font-family:'Liberation Serif',serif;font-weight:bold;color:#2a221e;letter-spacing:1.231px;background:repeating-linear-gradient(-50deg,#2a221e 0px,#2a221e 1.8px,#7a6e68 1.8px,#7a6e68 2.8px);-webkit-background-clip:text;background-clip:text;-webkit-text-fill-color:transparent">Toon</div>
<svg style="left:1319px;top:311px" width="16" height="10"><path d="M1.5 1.5 L8 8 L14.5 1.5" fill="none" stroke="#3a2f2a" stroke-width="2.2"/></svg>
<div class="a" style="left:927px;top:350px;width:409px;height:409px;background:#727567;background-image:repeating-linear-gradient(45deg,rgba(255,255,255,0.05) 0 2px,transparent 2px 6px)"></div>
<div class="a" style="left:956px;top:378px;width:352px;height:352px;background:#c6957b;box-shadow:inset 0 0 5px 1px rgba(110,60,40,0.55);background-image:repeating-linear-gradient(90deg,rgba(255,255,255,0.012) 0 3px,rgba(0,0,0,0.01) 3px 7px)"></div>
<svg style="left:0px;top:0px" width="1920" height="1080"><line x1="984.6" y1="405.5" x2="984.6" y2="704.0" stroke="#6d7263" stroke-width="3.5"/><line x1="1058.3" y1="405.5" x2="1058.3" y2="704.0" stroke="#6d7263" stroke-width="3.5"/><line x1="1131.8" y1="405.5" x2="1131.8" y2="704.0" stroke="#6d7263" stroke-width="3.5"/><line x1="1205.6" y1="405.5" x2="1205.6" y2="704.0" stroke="#6d7263" stroke-width="3.5"/><line x1="1278.8" y1="405.5" x2="1278.8" y2="704.0" stroke="#6d7263" stroke-width="3.5"/><line x1="982.85" y1="407" x2="1280.55" y2="407" stroke="#6d7263" stroke-width="3.5"/><line x1="982.85" y1="480.7" x2="1280.55" y2="480.7" stroke="#6d7263" stroke-width="3.5"/><line x1="982.85" y1="554.7" x2="1280.55" y2="554.7" stroke="#6d7263" stroke-width="3.5"/><line x1="982.85" y1="628.8" x2="1280.55" y2="628.8" stroke="#6d7263" stroke-width="3.5"/><line x1="982.85" y1="702.5" x2="1280.55" y2="702.5" stroke="#6d7263" stroke-width="3.5"/><circle cx="1058.3" cy="480.7" r="6.5" fill="#6d7263"/><circle cx="1205.6" cy="480.7" r="6.5" fill="#6d7263"/><circle cx="1058.3" cy="628.8" r="6.5" fill="#6d7263"/><circle cx="1205.6" cy="628.8" r="6.5" fill="#6d7263"/><text x="970" y="413" text-anchor="middle" font-family="Liberation Sans" font-weight="bold" font-size="17.5" fill="#6d7263">5</text><text x="970" y="486.7" text-anchor="middle" font-family="Liberation Sans" font-weight="bold" font-size="17.5" fill="#6d7263">4</text><text x="970" y="560.7" text-anchor="middle" font-family="Liberation Sans" font-weight="bold" font-size="17.5" fill="#6d7263">3</text><text x="970" y="634.8" text-anchor="middle" font-family="Liberation Sans" font-weight="bold" font-size="17.5" fill="#6d7263">2</text><text x="970" y="708.5" text-anchor="middle" font-family="Liberation Sans" font-weight="bold" font-size="17.5" fill="#6d7263">1</text><text x="984.6" y="721" text-anchor="middle" font-family="Liberation Sans" font-weight="bold" font-size="17.5" fill="#6d7263">A</text><text x="1058.3" y="721" text-anchor="middle" font-family="Liberation Sans" font-weight="bold" font-size="17.5" fill="#6d7263">B</text><text x="1131.8" y="721" text-anchor="middle" font-family="Liberation Sans" font-weight="bold" font-size="17.5" fill="#6d7263">C</text><text x="1205.6" y="721" text-anchor="middle" font-family="Liberation Sans" font-weight="bold" font-size="17.5" fill="#6d7263">D</text><text x="1278.8" y="721" text-anchor="middle" font-family="Liberation Sans" font-weight="bold" font-size="17.5" fill="#6d7263">E</text><defs><filter id="blur" x="-50%" y="-50%" width="200%" height="200%"><feGaussianBlur stdDeviation="3"/></filter></defs><circle cx="1058.3" cy="554.7" r="32.5" fill="#c5aa98" stroke="#231d1a" stroke-width="2.5"/><circle cx="1055.8" cy="551.7" r="27.5" fill="#f2dccd"/><circle cx="1058.3" cy="554.7" r="19" fill="none" stroke="#6b6f5c" stroke-width="5.5"/><circle cx="1131.8" cy="554.7" r="32.5" fill="#5a5c4c" stroke="#231d1a" stroke-width="2.5"/><circle cx="1129.3" cy="551.7" r="27.5" fill="#6b6f5c"/><ellipse cx="1119.8" cy="537.7" rx="6" ry="3.2" transform="rotate(-35 1119.8 537.7)" fill="#7f8472"/><circle cx="1205.6" cy="554.7" r="32.5" fill="#5a5c4c" stroke="#231d1a" stroke-width="2.5"/><circle cx="1203.1" cy="551.7" r="27.5" fill="#6b6f5c"/><circle cx="1205.6" cy="554.7" r="19" fill="none" stroke="#f5e2d5" stroke-width="5.5"/><circle cx="1131.8" cy="628.8" r="36.5" fill="rgba(60,40,30,0.35)" filter="url(#blur)"/><circle cx="1131.8" cy="628.8" r="32.5" fill="#c5aa98" stroke="#231d1a" stroke-width="2.5"/><circle cx="1129.3" cy="625.8" r="27.5" fill="#f2dccd"/><ellipse cx="1119.8" cy="611.8" rx="6" ry="3.2" transform="rotate(-35 1119.8 611.8)" fill="#fbeee5"/><circle cx="1131.8" cy="480.7" r="33" fill="rgba(245,225,212,0.45)" stroke="rgba(250,235,225,0.8)" stroke-width="2"/><path transform="translate(1121.8,464.7)" d="M12 0 L18 0 L18 30 L11 30 L11 9 L3 13 L1 7Z" fill="#1a1412" stroke="#1a1412" stroke-width="4" stroke-linejoin="round" opacity="0.9" /><path transform="translate(1119.8,462.7)" d="M12 0 L18 0 L18 30 L11 30 L11 9 L3 13 L1 7Z" fill="#fff" stroke="#1a1412" stroke-width="3" stroke-linejoin="round" paint-order="stroke"/></svg>
<div class="a" style="left:1023.3px;top:353.6px;width:218px;height:107px;background:#c49580;box-shadow:inset 0 0 0 1px #6a4a3a,4px 4px 0 #5a4035"></div>
<div class="a" style="left:1028.4px;top:358.7px;width:207.5px;height:96.7px;border:1.5px solid #5a3e32"></div>
<div class="a" style="left:1028.4px;top:358.7px;width:6.4px;height:6.4px;background:#6a4a3a"></div>
<div class="a" style="left:1229.5px;top:358.7px;width:6.4px;height:6.4px;background:#6a4a3a"></div>
<div class="a" style="left:1028.4px;top:449px;width:6.4px;height:6.4px;background:#6a4a3a"></div>
<div class="a" style="left:1229.5px;top:449px;width:6.4px;height:6.4px;background:#6a4a3a"></div>
<div class="a" style="left:1043.7px;top:374.7px;width:175.6px;height:66.2px;background:#e4cdbf;box-shadow:inset 0 0 0 1px #8a6a5a,3px 3px 0 #5a4035"></div>
<div class="a" style="left:1049.5px;top:379px;width:165.2px;height:56.8px;background:#d8b9a7;border:1.5px solid #5a3e32"></div>
<div class="a" style="left:1091.3px;top:384px;width:82px;height:47px;background:#ece0d8;box-shadow:inset 0 0 0 1px #7a6a60"></div>
<div class="a" style="left:1097px;top:389.2px;width:70px;height:35.6px;border:1.5px solid #3a302b"></div>
<div class="t" style="left:1117.5px;top:392.7px;font-size:29.5px;font-family:'Liberation Serif',serif;font-weight:bold;color:#2a221e;letter-spacing:-2.286px;background:repeating-linear-gradient(-50deg,#2a221e 0px,#2a221e 1.8px,#7a6e68 1.8px,#7a6e68 2.8px);-webkit-background-clip:text;background-clip:text;-webkit-text-fill-color:transparent">UI</div>
<div class="a" style="left:814px;top:787px;width:135px;height:50px;background:#efe4dd;box-shadow:inset 0 0 0 1px #6a5a52,2px 2px 0 #5a4a43"></div>
<div class="a" style="left:819px;top:792px;width:125px;height:39px;border:1.5px solid #3a302b"></div>
<div class="t" style="left:834px;top:796.6px;font-size:32px;font-family:'Liberation Serif',serif;font-weight:bold;color:#2a221e;letter-spacing:-0.041px;background:repeating-linear-gradient(-50deg,#2a221e 0px,#2a221e 1.8px,#7a6e68 1.8px,#7a6e68 2.8px);-webkit-background-clip:text;background-clip:text;-webkit-text-fill-color:transparent">Cancel</div>
<div class="a" style="left:976px;top:787px;width:131px;height:50px;background:#efe4dd;box-shadow:inset 0 0 0 1px #6a5a52,2px 2px 0 #5a4a43"></div>
<div class="a" style="left:981px;top:792px;width:121px;height:39px;border:1.5px solid #3a302b"></div>
<div class="t" style="left:994.3px;top:796.6px;font-size:32px;font-family:'Liberation Serif',serif;font-weight:bold;color:#2a221e;letter-spacing:-0.495px;background:repeating-linear-gradient(-50deg,#2a221e 0px,#2a221e 1.8px,#7a6e68 1.8px,#7a6e68 2.8px);-webkit-background-clip:text;background-clip:text;-webkit-text-fill-color:transparent">Accept</div>
</body></html>
